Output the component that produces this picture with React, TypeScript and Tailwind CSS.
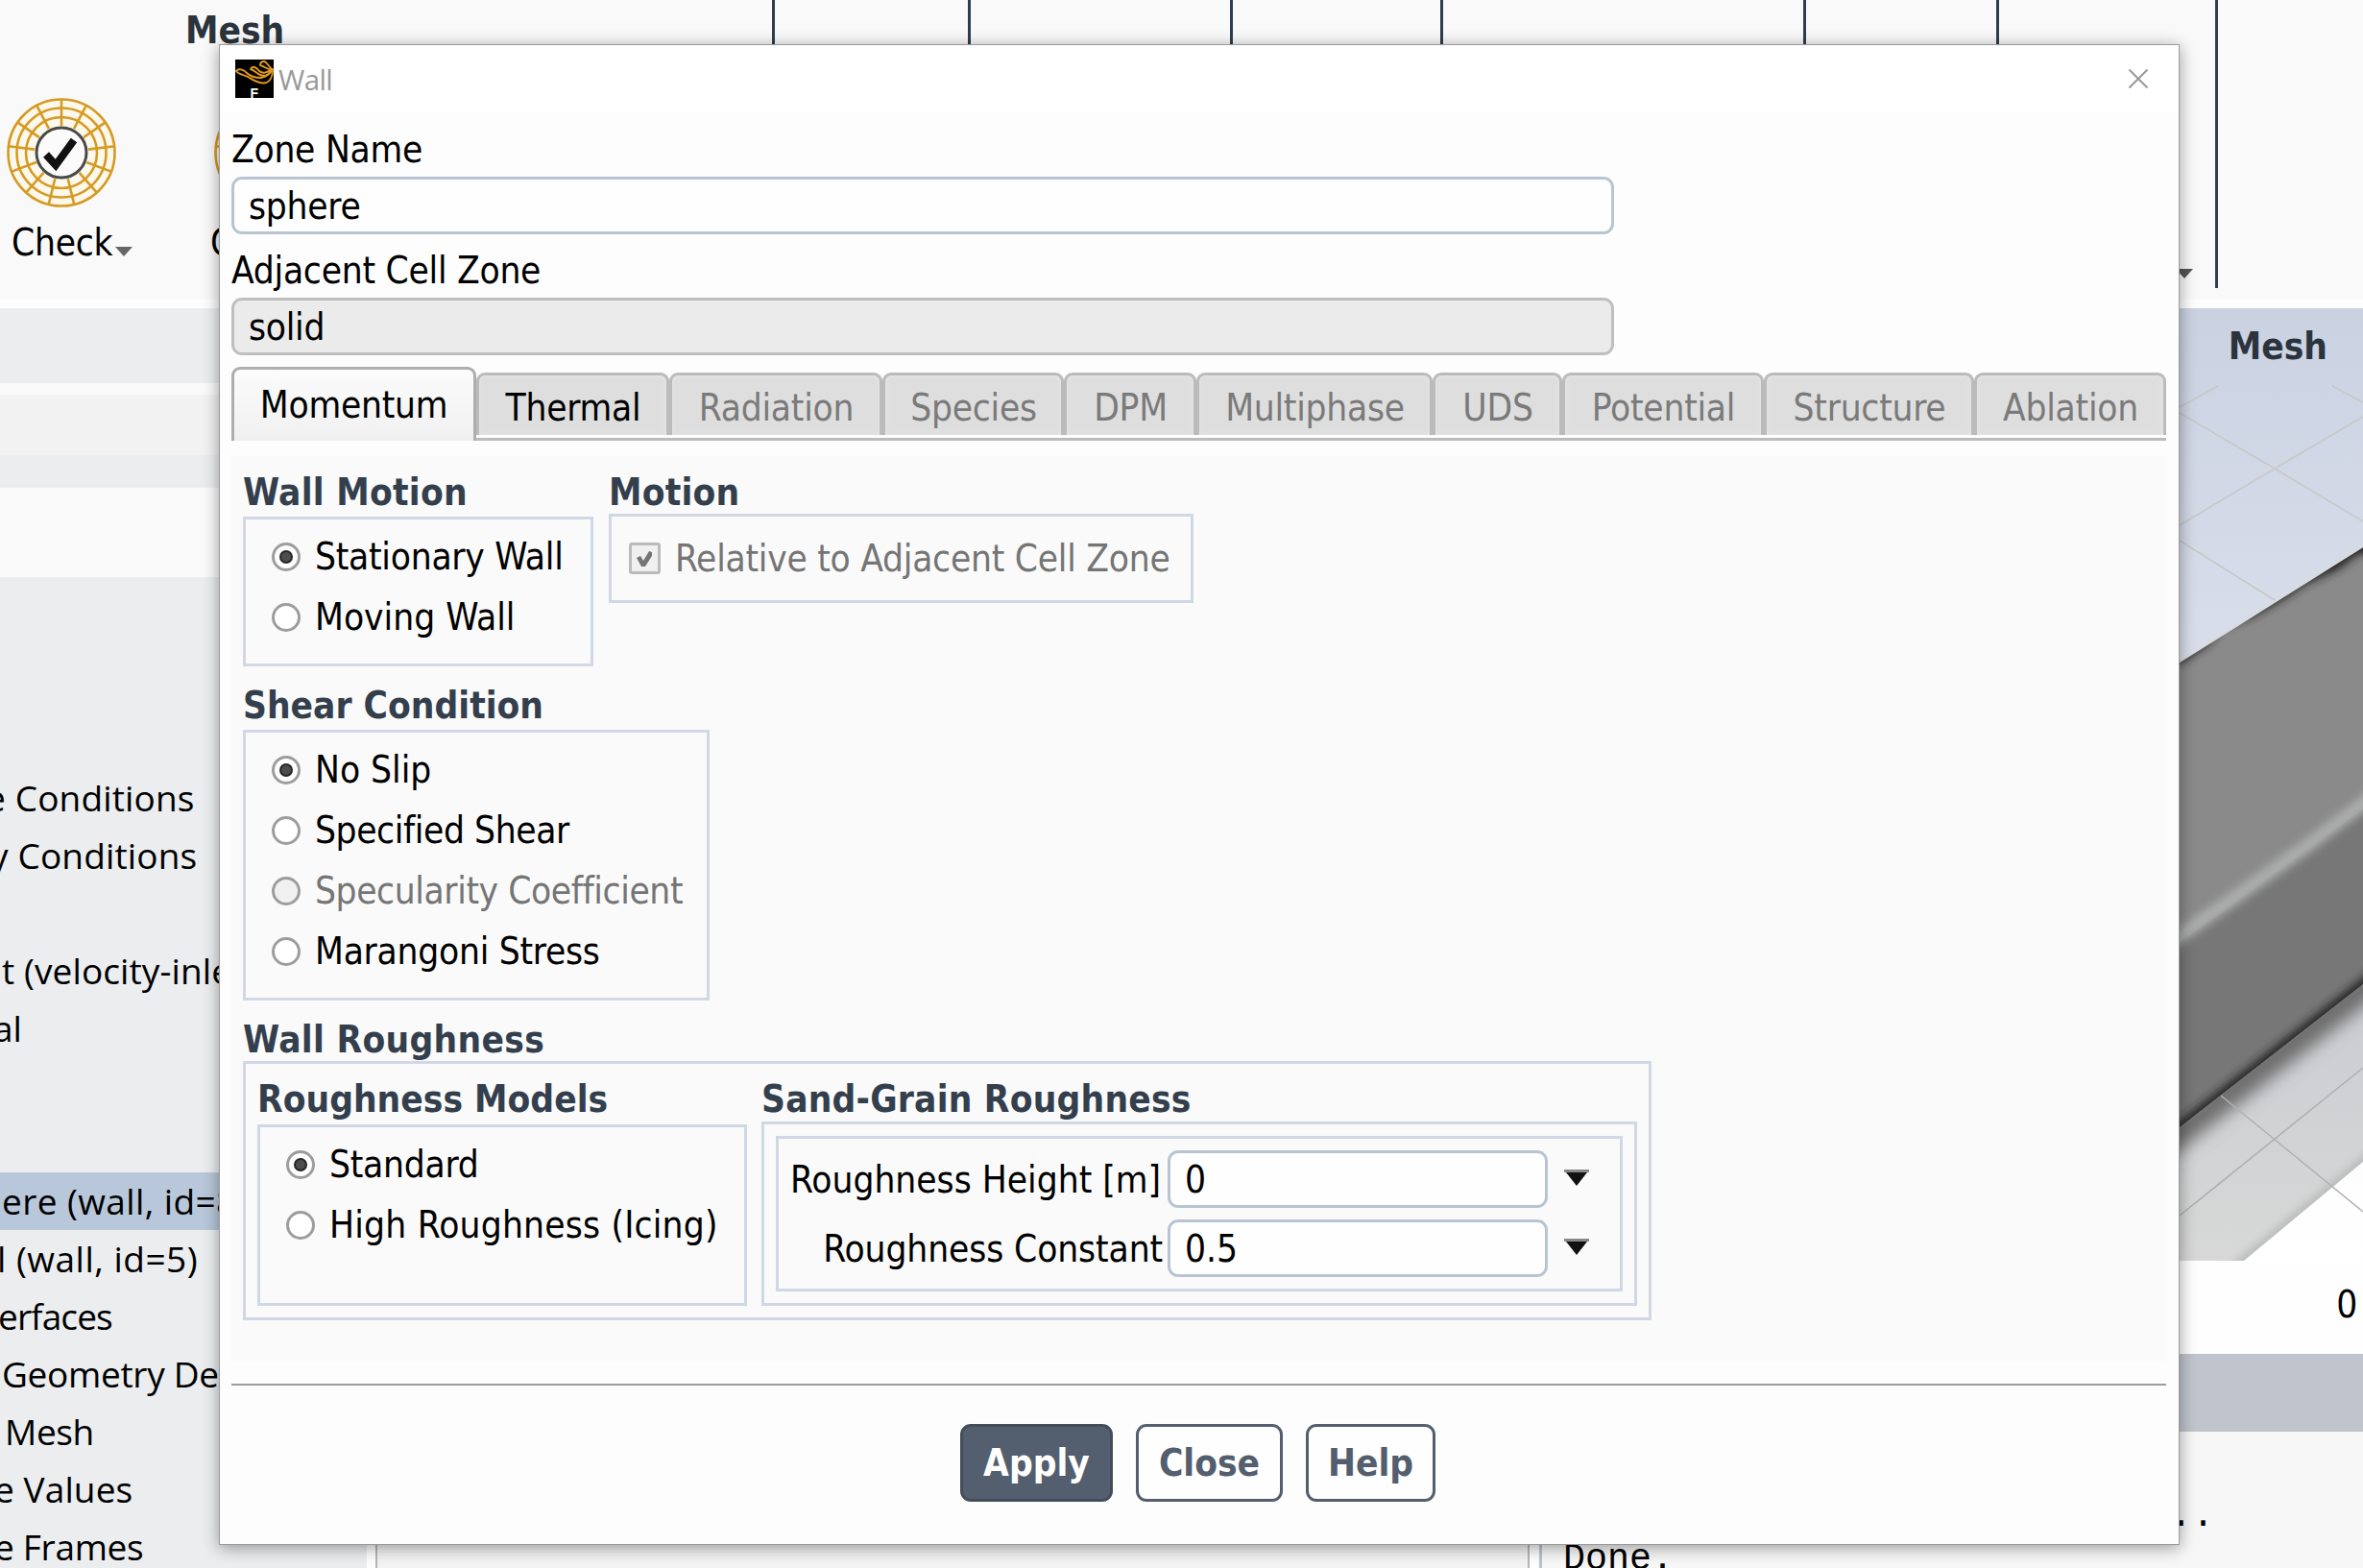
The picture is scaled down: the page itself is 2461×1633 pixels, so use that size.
import { ReactNode } from 'react';
import clsx from 'clsx';

interface TreeRow {
	label: string;
	offset: number;
	tracking: string;
	active?: boolean;
}

const TREE_ROWS: TreeRow[] = [
	{ label: '', offset: 0, tracking: '' },
	{ label: 'e Conditions', offset: -15, tracking: 'tracking-[0.15px]' },
	{ label: 'y Conditions', offset: -10, tracking: 'tracking-[0.15px]' },
	{ label: '', offset: 0, tracking: '' },
	{ label: 't (velocity-inle', offset: 2, tracking: 'tracking-[0.1px]' },
	{ label: 'al', offset: -7, tracking: 'tracking-[0px]' },
	{ label: '', offset: 0, tracking: '' },
	{ label: '', offset: 0, tracking: '' },
	{
		label: 'ere (wall, id=8',
		offset: 2,
		tracking: 'tracking-[0.4px]',
		active: true,
	},
	{ label: 'l (wall, id=5)', offset: -3, tracking: 'tracking-[0.5px]' },
	{ label: 'erfaces', offset: -2, tracking: 'tracking-[-0.9px]' },
	{ label: 'Geometry De', offset: 2, tracking: 'tracking-[-0.3px]' },
	{ label: 'Mesh', offset: 5, tracking: 'tracking-[-0.4px]' },
	{ label: 'e Values', offset: -6, tracking: 'tracking-[0.1px]' },
	{ label: 'e Frames', offset: -6, tracking: 'tracking-[-0.3px]' },
];

// The mesh globe has 13 radial lines, so two of them straddle the bottom
const SPOKES = Array.from({ length: 13 }, (_, index) => (index * 360) / 13);

function MeshIcon({ checked }: { checked?: boolean }) {
	return (
		<svg viewBox="0 0 116 116" className="w-[116px] h-[116px] flex-shrink-0">
			<circle cx="58" cy="58" r="56" fill="#fcf8ec" />
			<g fill="none" stroke="#d69a22" strokeWidth="2.6">
				<circle cx="58" cy="58" r="55.5" />
				<circle cx="58" cy="58" r="46.5" />
				<circle cx="58" cy="58" r="37" />
				{SPOKES.map((angle) => (
					<path
						key={angle}
						d="M58 2V30"
						transform={`rotate(${angle} 58 58)`}
					/>
				))}
			</g>
			<circle
				cx="58"
				cy="58"
				r="26"
				fill="#fbfbfb"
				stroke="#4a4a4a"
				strokeWidth="3"
			/>
			{checked && (
				<path
					d="M42 60L52 71L71 45"
					fill="none"
					stroke="#111"
					strokeWidth="8"
				/>
			)}
		</svg>
	);
}

function RibbonSection({
	className,
	children,
}: {
	className: string;
	children?: ReactNode;
}) {
	return (
		<div
			className={clsx(
				'h-[300px] flex-shrink-0 border-r-[3px] border-[#2f3e4e]',
				className
			)}
		>
			{children}
		</div>
	);
}

function Ribbon() {
	return (
		<div className="flex h-[312px] bg-[#f9f9f9]">
			<RibbonSection className="w-[807px]">
				<h2 className="pt-[8px] pl-[193px] leading-[48px] font-bold tracking-normal text-[#2b333c]">
					Mesh
				</h2>
				<div className="flex gap-[100px] pt-[45px] pl-[6px]">
					<div className="w-[116px]">
						<MeshIcon checked />
						<div className="flex mt-[12px] pl-[6px] whitespace-nowrap">
							<span className="leading-[48px]">Check</span>
							<svg
								viewBox="0 0 18 10"
								className="w-[18px] h-[10px] mt-[28px] ml-[3px] flex-shrink-0"
							>
								<path d="M0 0H18L9 10Z" fill="#666" />
							</svg>
						</div>
					</div>
					<div className="w-[116px]">
						<MeshIcon />
						<p className="mt-[12px] -ml-[3px] leading-[48px]">C</p>
					</div>
				</div>
			</RibbonSection>
			<RibbonSection className="w-[204px]" />
			<RibbonSection className="w-[273px]" />
			<RibbonSection className="w-[219px]" />
			<RibbonSection className="w-[378px]" />
			<RibbonSection className="w-[201px]" />
			<RibbonSection className="w-[228px] flex justify-end items-end pb-[10px] pr-[23px]">
				<svg viewBox="0 0 18 10" className="w-[18px] h-[10px]">
					<path d="M0 0H18L9 10Z" fill="#555" />
				</svg>
			</RibbonSection>
		</div>
	);
}

function OutlineTree() {
	return (
		<div className="w-[382px] flex-shrink-0 overflow-hidden bg-[#ebedef]">
			<div className="h-[78px]" />
			<div className="h-[12px] bg-[#fafafa]" />
			<div className="h-[63px] bg-[#f2f2f3]" />
			<div className="h-[34px]" />
			<div className="h-[93px] bg-[#fafafa]" />
			<div className="h-[140px]" />
			{TREE_ROWS.map((row, index) => (
				<div
					key={index}
					className={clsx(
						"h-[60px] leading-[60px] whitespace-nowrap text-[37px] font-['Open_Sans','Noto_Sans',sans-serif]",
						row.tracking,
						row.active && 'bg-[#b8c8da]'
					)}
				>
					<span style={{ marginLeft: row.offset }}>{row.label}</span>
				</div>
			))}
		</div>
	);
}

function MeshView() {
	return (
		<svg viewBox="0 0 191 992" className="w-[191px] h-[992px]">
			<defs>
				<linearGradient id="sky" x1="0" y1="0" x2="0" y2="1">
					<stop offset="0" stopColor="#cad2e2" />
					<stop offset="0.37" stopColor="#d9deea" />
					<stop offset="0.85" stopColor="#fcfcfc" />
					<stop offset="1" stopColor="#ffffff" />
				</linearGradient>
				<linearGradient id="floor" x1="0" y1="0" x2="0" y2="1">
					<stop offset="0" stopColor="#cbccd1" />
					<stop offset="1" stopColor="#d7d8d7" />
				</linearGradient>
				<filter id="soft" x="-30%" y="-30%" width="160%" height="160%">
					<feGaussianBlur stdDeviation="5" />
				</filter>
				<filter id="softer" x="-30%" y="-30%" width="160%" height="160%">
					<feGaussianBlur stdDeviation="9" />
				</filter>
				<clipPath id="bodyClip">
					<path d="M0 369L191 249V704L0 853Z" />
				</clipPath>
				<clipPath id="floorClip">
					<path d="M0 853L191 704V889L67 992H0Z" />
				</clipPath>
			</defs>
			<rect width="191" height="992" fill="url(#sky)" />
			<g fill="none" stroke="#c7c8c8" strokeWidth="1.6">
				<path d="M0 103L40 81M159 81L191 98M0 109L99 167L191 222M191 113L99 167L0 226M0 242L99 304" />
			</g>

			<g clipPath="url(#floorClip)">
				<path d="M0 853L191 704V889L67 992H0Z" fill="url(#floor)" />
				<path
					d="M-20 872L210 692"
					stroke="#6c6c6c"
					strokeWidth="32"
					filter="url(#softer)"
				/>
				<path
					d="M50 1006L210 874"
					stroke="#b4b6b6"
					strokeWidth="9"
					filter="url(#soft)"
				/>
			</g>
			<path
				d="M0 945L191 791M43 820L191 941"
				stroke="#b0b1b2"
				strokeWidth="1.6"
			/>

			<g clipPath="url(#bodyClip)">
				<rect width="191" height="992" fill="#8a8a8a" />
				<path d="M0 661L191 522V992H0Z" fill="#777777" />
				<path
					d="M-20 668L60 612L130 562L215 498"
					fill="none"
					stroke="#adaeae"
					strokeWidth="14"
					filter="url(#soft)"
				/>
				<path
					d="M-10 362L205 230V255L186 256L165 272L130 288L108 303L75 322L45 332L30 350L0 371Z"
					fill="#202020"
					filter="url(#soft)"
				/>
				<path
					d="M-10 862L205 694"
					stroke="#222"
					strokeWidth="12"
					filter="url(#soft)"
				/>
			</g>
			<path d="M0 368L191 248" stroke="#d9dbdd" strokeWidth="1.6" />
		</svg>
	);
}

function Workspace() {
	return (
		<div className="flex mt-[9px] h-[1312px]">
			<OutlineTree />
			<div className="ml-[9px] w-[1202px] flex-shrink-0 border-x-[2px] border-[#b3b5b8] bg-[#f3f3f3]" />
			<div className="ml-[10px] w-[858px] flex-shrink-0">
				<div className="relative h-[1089px]">
					<div className="flex justify-end">
						<MeshView />
					</div>
					<h2 className="absolute right-[37px] top-[16px] leading-[48px] font-bold tracking-normal text-[#2b333c]">
						Mesh
					</h2>
					<p className="text-right pr-[6px] pt-[22px] leading-[48px]">0</p>
				</div>
				<div className="h-[81px] bg-[#bfc4cd]" />
				<div className="h-[142px] overflow-hidden border-l-[3px] border-[#b9c4d2] bg-[#f7f7f7] pt-[67px] pl-[22px] leading-[43px] text-[38.3px] tracking-normal font-['Liberation_Mono',monospace]">
					<p className="pl-[632px]">..</p>
					<p className="pt-[2px]">Done.</p>
				</div>
			</div>
		</div>
	);
}

function Group({
	title,
	titleClassName,
	className,
	children,
}: {
	title: string;
	titleClassName: string;
	className: string;
	children: ReactNode;
}) {
	return (
		<section>
			<h3
				className={clsx(
					'leading-[48px] font-bold text-[#343f4d] whitespace-nowrap',
					titleClassName
				)}
			>
				{title}
			</h3>
			<div className={clsx('border-[3px] border-[#d0d7e5]', className)}>
				{children}
			</div>
		</section>
	);
}

function Radio({
	label,
	checked,
	disabled,
	className,
}: {
	label: string;
	checked?: boolean;
	disabled?: boolean;
	className?: string;
}) {
	return (
		<label className={clsx('flex items-center gap-[15px] h-[30px]', className)}>
			<span
				className={clsx(
					'flex items-center justify-center w-[30px] h-[30px] rounded-full border-[3px] border-[#9d9d9d]',
					disabled ? 'bg-[#f0f0f0]' : 'bg-white'
				)}
			>
				{checked && (
					<span className="w-[14px] h-[14px] rounded-full border-[2px] border-[#252525] bg-[#4d4d4d]" />
				)}
			</span>
			<span
				className={clsx(
					'leading-[30px] whitespace-nowrap',
					disabled && 'text-[#757575]'
				)}
			>
				{label}
			</span>
		</label>
	);
}

function Field({
	value,
	className,
	disabled,
}: {
	value: string;
	className: string;
	disabled?: boolean;
}) {
	return (
		<div
			className={clsx(
				'h-[60px] border-[3px] rounded-[11px] pl-[15px] leading-[56px]',
				disabled
					? 'bg-[#ebebeb] border-[#bfbfbf]'
					: 'bg-[#fefefe] border-[#b9c4d2]',
				className
			)}
		>
			{value}
		</div>
	);
}

function RoughnessRow({
	label,
	value,
	className,
}: {
	label: string;
	value: string;
	className: string;
}) {
	return (
		<div className="flex h-[60px]">
			<span
				className={clsx(
					'text-right leading-[62px] whitespace-nowrap',
					className
				)}
			>
				{label}
			</span>
			<Field value={value} className="w-[396px] tracking-normal" />
			<svg
				viewBox="0 0 26 18"
				className="w-[26px] h-[18px] mt-[20px] ml-[17px]"
			>
				<path d="M2 3H24L13 17Z" fill="#111" />
				<path d="M0 0H26V3H0Z" fill="#888" />
			</svg>
		</div>
	);
}

const TABS = [
	{ label: 'Thermal', className: 'w-[201px] text-black' },
	{ label: 'Radiation', className: 'w-[222px] text-[#7a7a7a]' },
	{ label: 'Species', className: 'w-[189px] text-[#7a7a7a]' },
	{ label: 'DPM', className: 'w-[138px] text-[#7a7a7a]' },
	{ label: 'Multiphase', className: 'w-[246px] text-[#7a7a7a]' },
	{ label: 'UDS', className: 'w-[135px] text-[#7a7a7a]' },
	{ label: 'Potential', className: 'w-[210px] text-[#7a7a7a]' },
	{ label: 'Structure', className: 'w-[219px] text-[#7a7a7a]' },
	{ label: 'Ablation', className: 'w-[200px] text-[#7a7a7a]' },
];

function Tabs() {
	return (
		<div className="flex mt-[12px] h-[77px] w-[2016px]">
			<div className="w-[255px] h-[77px] flex-shrink-0 border-[3px] border-b-0 border-[#aeaeae] rounded-t-[9px] bg-gradient-to-b from-[#fcfcfc] to-[#f0f0f0] text-center leading-[74px]">
				Momentum
			</div>
			<div className="flex h-[77px] pt-[6px] border-b-[3px] border-[#bcbcbc]">
				{TABS.map((tab) => (
					<div
						key={tab.label}
						className={clsx(
							'h-[65px] border-[3px] border-b-0 border-[#bbbbbb] rounded-t-[9px] bg-[#dedede] pl-[1px] text-center leading-[68px] shadow-[inset_0_0_5px_#e8e8e8]',
							tab.className
						)}
					>
						{tab.label}
					</div>
				))}
			</div>
		</div>
	);
}

function MomentumPanel() {
	return (
		<div className="mt-[16px] h-[942px] w-[2016px] bg-[#fafafa] pt-[14px] pl-[12px]">
			<div className="flex gap-[16px]">
				<Group
					title="Wall Motion"
					titleClassName="h-[49px] tracking-[0.25px]"
					className="flex flex-col gap-[33px] w-[365px] h-[156px] pt-[24px] pl-[27px]"
				>
					<Radio label="Stationary Wall" checked />
					<Radio label="Moving Wall" className="tracking-normal" />
				</Group>
				<Group
					title="Motion"
					titleClassName="h-[46px] tracking-[0.2px]"
					className="w-[609px] h-[93px] pt-[27px] pl-[18px]"
				>
					<label className="flex items-center gap-[15px] h-[33px] text-[#757575]">
						<span className="w-[33px] h-[33px] rounded-[3px] border-[3px] border-[#bbbbbb] bg-[#f0f0f0]">
							<svg viewBox="0 0 27 27" className="w-[27px] h-[27px]">
								<path
									d="M5 13L9 11L12 16L18 6L21 7V11L14 22H10Z"
									fill="#757575"
								/>
							</svg>
						</span>
						<span className="leading-[35px] whitespace-nowrap">
							Relative to Adjacent Cell Zone
						</span>
					</label>
				</Group>
			</div>

			<div className="mt-[17px]">
				<Group
					title="Shear Condition"
					titleClassName="h-[49px] tracking-normal"
					className="flex flex-col gap-[33px] w-[486px] h-[282px] pt-[24px] pl-[27px]"
				>
					<Radio label="No Slip" className="tracking-normal" checked />
					<Radio label="Specified Shear" className="tracking-[-0.4px]" />
					<Radio
						label="Specularity Coefficient"
						className="tracking-[-0.4px]"
						disabled
					/>
					<Radio label="Marangoni Stress" />
				</Group>
			</div>

			<div className="mt-[17px]">
				<Group
					title="Wall Roughness"
					titleClassName="h-[46px] tracking-[0.3px]"
					className="flex gap-[15px] w-[1467px] h-[270px] pt-[13px] pl-[12px]"
				>
					<Group
						title="Roughness Models"
						titleClassName="h-[50px] tracking-normal"
						className="flex flex-col gap-[33px] w-[510px] h-[189px] pt-[24px] pl-[27px]"
					>
						<Radio label="Standard" checked />
						<Radio
							label="High Roughness (Icing)"
							className="tracking-[0.2px]"
						/>
					</Group>
					<Group
						title="Sand-Grain Roughness"
						titleClassName="h-[47px] tracking-[0.2px]"
						className="w-[912px] h-[192px] p-[12px]"
					>
						<div className="flex flex-col gap-[12px] h-[162px] border-[3px] border-[#d0d7e5] pt-[12px]">
							<RoughnessRow
								label="Roughness Height [m]"
								value="0"
								className="w-[398px] mr-[7px] tracking-normal"
							/>
							<RoughnessRow
								label="Roughness Constant"
								value="0.5"
								className="w-[400px] mr-[5px] tracking-[-0.1px]"
							/>
						</div>
					</Group>
				</Group>
			</div>
		</div>
	);
}

function WallDialog() {
	return (
		<div className="absolute left-[228px] top-[46px] w-[2042px] h-[1563px] border border-[#9a9a9a] bg-[#fdfdfd] shadow-[0_3px_16px_rgba(0,0,0,0.38)]">
			<div className="flex h-[70px] bg-white pt-[15px] pl-[16px]">
				<svg viewBox="0 0 40 40" className="w-[40px] h-[40px]">
					<rect width="40" height="40" fill="#000" />
					<g
						fill="none"
						stroke="#e39a1c"
						strokeWidth="1.9"
						strokeLinejoin="round"
					>
						<path d="M1 12C3 9 8 10 12 14C16 18 21 19 27 19C32 18 36 15 39 10C39 18 36 24 30 24.500C23 25 17 20 12 17.500C7 15.500 3 15 1 12Z" />
						<path d="M16 10C18 6 22 8 25 12C28 15 34 14 38 10C36 16 31 18 26 16C22 14.500 20 11 16 10Z" />
						<path d="M26 6C26 2 30 1 32 3L38 10C33 11 31 7 26 6Z" />
					</g>
					<text
						x="15.500"
						y="39.500"
						fill="#fff"
						fontSize="14"
						fontWeight="bold"
						fontFamily="Liberation Sans"
					>
						F
					</text>
				</svg>
				<span className="ml-[5px] leading-[42px] text-[29.5px] text-[#999999] tracking-[-0.6px] font-['Open_Sans',sans-serif]">
					Wall
				</span>
				<svg
					viewBox="0 0 20 20"
					className="w-[20px] h-[20px] ml-auto mr-[32px] mt-[10px]"
				>
					<path
						d="M0.5 0.5L19.5 19.5M19.5 0.5L0.5 19.5"
						stroke="#999"
						strokeWidth="2"
					/>
				</svg>
			</div>

			<div className="pl-[12px]">
				<p className="mt-[15px] leading-[48px]">Zone Name</p>
				<Field value="sphere" className="mt-[4px] w-[1440px]" />
				<p className="mt-[14px] leading-[48px]">Adjacent Cell Zone</p>
				<Field value="solid" className="mt-[4px] w-[1440px]" disabled />

				<Tabs />
				<MomentumPanel />

				<div className="mt-[24px] h-[2px] w-[2015px] bg-[#9d9d9d]" />

				<div className="flex gap-[24px] mt-[40px] pl-[759px] font-bold tracking-normal text-[#535e6e]">
					<button className="w-[159px] h-[81px] border-[3px] rounded-[11px] border-[#454d5b] bg-[#535e6e] text-white">
						Apply
					</button>
					<button className="w-[153px] h-[81px] border-[3px] rounded-[11px] border-[#535e6e] bg-[#fefefe]">
						Close
					</button>
					<button className="w-[135px] h-[81px] border-[3px] rounded-[11px] border-[#535e6e] bg-[#fefefe]">
						Help
					</button>
				</div>
			</div>
		</div>
	);
}

export default function App() {
	return (
		<div className="relative w-[2461px] h-[1633px] overflow-hidden bg-[#fefefe] text-black text-[38.5px] tracking-[-0.25px] font-['DejaVu_Sans_Condensed','Noto_Sans',sans-serif]">
			<Ribbon />
			<Workspace />
			<WallDialog />
		</div>
	);
}
